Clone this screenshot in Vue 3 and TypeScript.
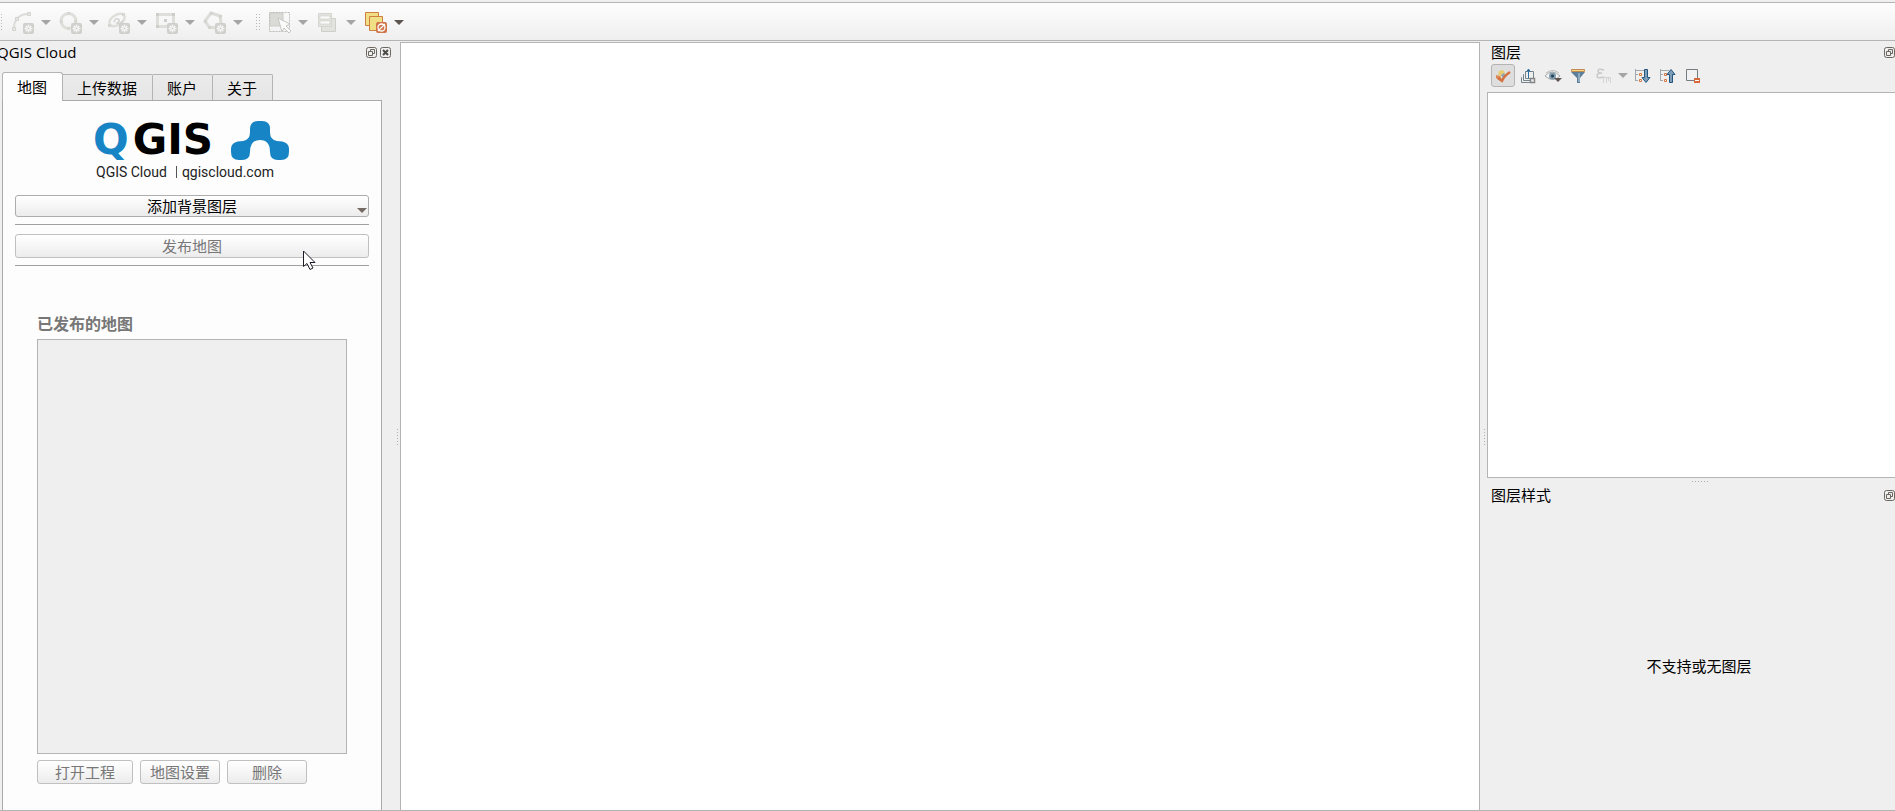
<script setup lang="ts">
import { ref } from 'vue'

const drawTools = [
  { id: 'curve', label: 'Add curve' },
  { id: 'circle', label: 'Add circle' },
  { id: 'ellipse', label: 'Add ellipse' },
  { id: 'rect', label: 'Add rectangle' },
  { id: 'polygon', label: 'Add regular polygon' },
]
const selectTools = [
  { id: 'select', label: 'Select features', enabled: false },
  { id: 'form', label: 'Select by value', enabled: false },
  { id: 'deselect', label: 'Deselect features', enabled: true },
]
const layerTools = [
  { id: 'style', label: 'Layer styling', pressed: true, enabled: true, menu: false },
  { id: 'group', label: 'Add group', pressed: false, enabled: true, menu: false },
  { id: 'eye', label: 'Map themes', pressed: false, enabled: true, menu: false },
  { id: 'filter', label: 'Filter legend', pressed: false, enabled: true, menu: false },
  { id: 'epsilon', label: 'Filter by expression', pressed: false, enabled: false, menu: true },
  { id: 'expand', label: 'Expand all', pressed: false, enabled: true, menu: false },
  { id: 'collapse', label: 'Collapse all', pressed: false, enabled: true, menu: false },
  { id: 'remove', label: 'Remove layer', pressed: false, enabled: true, menu: false },
]
const tabs = ['地图', '上传数据', '账户', '关于']
const activeTab = ref(0)
</script>

<template>
  <div class="app">
    <svg class="defs" aria-hidden="true">
      <symbol id="new-badge" viewBox="0 0 11 11">
        <rect width="11" height="11" rx="2" fill="#cfcfcc" />
        <path d="M5.5 1.5v8M1.5 5.5h8M2.7 2.7l5.6 5.6M8.3 2.7l-5.6 5.6" stroke="#f8f8f8" stroke-width="1.3" />
        <circle cx="5.5" cy="5.5" r="1" fill="#cfcfcc" />
      </symbol>
      <symbol id="tool-curve" viewBox="0 0 24 24">
        <path d="M3 17C3 9 8 3 17 3" fill="none" stroke="#dcdcda" stroke-width="2" />
        <path d="M1.500 16.500h3v3h-3zM4.500 6.500h3v3h-3zM16.500 1.500h3v3h-3z" fill="#e6e6e4" stroke="#d3d3d0" />
        <use href="#new-badge" x="12" y="12" width="11" height="11" />
      </symbol>
      <symbol id="tool-circle" viewBox="0 0 24 24">
        <circle cx="9.500" cy="10" r="7.500" fill="none" stroke="#dededb" stroke-width="3" />
        <path d="M8 1h3v3H8zM1 9h3v3H1zM15 9h3v3h-3zM8 16h3v3H8z" fill="#d6d6d3" />
        <use href="#new-badge" x="12" y="12" width="11" height="11" />
      </symbol>
      <symbol id="tool-ellipse" viewBox="0 0 24 24">
        <ellipse cx="10" cy="9" rx="8.500" ry="5" transform="rotate(-32 10 9)" fill="none" stroke="#dededb" stroke-width="2.500" />
        <path d="M7 11q1-4 4-3t-1 4q4 1 6-2" fill="none" stroke="#d3d3d0" stroke-width="1.500" />
        <path d="M1 13h3v3H1zM15 2h3v3h-3z" fill="#d6d6d3" />
        <use href="#new-badge" x="12" y="12" width="11" height="11" />
      </symbol>
      <symbol id="tool-rect" viewBox="0 0 24 24">
        <path d="M2.500 3.500h16v12h-16z" fill="none" stroke="#dededb" stroke-width="3" />
        <path d="M1 2h3v3H1zM17 2h3v3h-3zM1 14h3v3H1zM9 8h3v3H9z" fill="#cdcdca" />
        <use href="#new-badge" x="12" y="12" width="11" height="11" />
      </symbol>
      <symbol id="tool-polygon" viewBox="0 0 24 24">
        <path d="M8 2l9 3 1 7-6 5-6-1-4-6z" fill="none" stroke="#dcdcd9" stroke-width="3" />
        <path d="M7 1h3v3H7zM16 4h3v3h-3zM1 9h3v3H1zM5 15h3v3H5z" fill="#d3d3d0" />
        <use href="#new-badge" x="12" y="12" width="11" height="11" />
      </symbol>
      <symbol id="tool-select" viewBox="0 0 24 24">
        <path d="M2 2h13v13H2z" fill="#dadad7" stroke="#cecdc9" />
        <path d="M1.500 1.500h20v19h-20z" fill="none" stroke="#bdbdb9" stroke-dasharray="2 1" />
        <path d="M10 7l12 6-4 2 5 5-2 2-5-5-2 4z" fill="#fafafa" stroke="#c6c6c2" />
      </symbol>
      <symbol id="tool-form" viewBox="0 0 24 24">
        <path d="M5.500 7.500h14v13h-14z" fill="#e2e2de" stroke="#cfcfca" />
        <path d="M2.500 2.500h13v13h-13z" fill="#e2e2de" stroke="#d6d6d1" />
        <path d="M4 5h10v3H4zM4 10h10v3H4z" fill="#fbfbfb" stroke="#d3d3ce" stroke-width=".7" />
      </symbol>
      <symbol id="tool-deselect" viewBox="0 0 24 24">
        <path d="M1.500 1.500h13v13h-13z" fill="#f0df84" stroke="#cf8040" />
        <path d="M5.500 5.500h13v14h-13z" fill="#f0df84" stroke="#cf8040" />
        <rect x="12" y="11" width="11" height="11" rx="2" fill="#d07449" />
        <circle cx="17.500" cy="16.500" r="3.500" fill="none" stroke="#fff" stroke-width="1.300" />
        <path d="M14 20l7-7" stroke="#fff" stroke-width="1.300" />
      </symbol>
      <symbol id="arrow" viewBox="0 0 10 5"><path d="M0 0h10L5 5z" fill="currentColor" /></symbol>
      <symbol id="dock-float" viewBox="0 0 11 11">
        <rect x=".5" y=".5" width="10" height="10" rx="2" fill="none" stroke="#6c6660" />
        <path d="M2.500 4.500h4v4h-4zM4.500 4v-1.500h4v4H7" fill="none" stroke="#6c6660" />
      </symbol>
      <symbol id="dock-close" viewBox="0 0 11 11">
        <rect x=".5" y=".5" width="10" height="10" rx="2" fill="none" stroke="#6c6660" />
        <path d="M3 3l5 5M8 3L3 8" stroke="#4e4944" stroke-width="2" />
      </symbol>
      <symbol id="layer-style" viewBox="0 0 16 16">
        <path d="M4 3l4-1 2 3-2 4-5-2z" fill="#e8cd6e" />
        <path d="M1 7l4 1 2 3-2 2-4-3z" fill="#db8a55" />
        <path d="M6 7l3-2 2 3-3 2z" fill="#8fa3b4" />
        <path d="M3 10l4 3q2-5 8-9" fill="none" stroke="#d5703f" stroke-width="2.300" />
      </symbol>
      <symbol id="layer-group" viewBox="0 0 16 16">
        <path d="M5.500 10.500V3.500h8v7M5.500 10.500H10M4 6.500H3.500v6H10M2 9.500H1.500v5H10" fill="none" stroke="#75858b" />
        <path d="M8.500 1v9M6.500 4l2-3 2 3" fill="none" stroke="#316e9f" />
        <path d="M10.500 10.500h4v4h-4z" fill="#eee" stroke="#858585" stroke-width="1.500" />
      </symbol>
      <symbol id="layer-eye" viewBox="0 0 18 16">
        <path d="M1 8q7-8 15 0-7 7-15 0z" fill="#f7f7f7" stroke="#a3a8aa" />
        <path d="M2 5q7-5 13 0" fill="none" stroke="#b6babb" />
        <circle cx="8.500" cy="8" r="3.500" fill="#7d98aa" /><circle cx="8.500" cy="8" r="1.500" fill="#243e52" />
        <path d="M10 10h8l-4 4z" fill="#5f5550" />
      </symbol>
      <symbol id="layer-filter" viewBox="0 0 16 16">
        <path d="M1 4h14l-5 6v5H7v-5z" fill="#5b7e9b" /><path d="M8 5h2v9H8z" fill="#8fa9bc" />
        <path d="M1.500 1.500h13v2h-13z" fill="#f2d98a" stroke="#c08a50" />
      </symbol>
      <symbol id="layer-epsilon" viewBox="0 0 16 16">
        <path d="M8 2Q2 0 2 3q0 2 4 2-5 0-5 3 0 3 7 1" fill="none" stroke="#c9c9c9" stroke-width="1.500" />
        <path d="M7.500 15V9.500h7V15M10.500 10v5M12.500 10v3" fill="none" stroke="#d4d4d4" />
      </symbol>
      <symbol id="layer-tree" viewBox="0 0 16 16">
        <path d="M.5 1v12M.5 2.500H9M.5 6.500H3M.5 12.500H3" fill="none" stroke="#a2a9ac" />
        <path d="M4.500 5.500h2v2h-2zM4.500 11.500h2v2h-2z" fill="#fff" stroke="#d8743c" />
      </symbol>
      <symbol id="layer-expand" viewBox="0 0 16 16">
        <use href="#layer-tree" width="16" height="16" />
        <path d="M9.500 1.500v8H7l4 5 4-5h-2.500v-8z" fill="#7d9fba" stroke="#24557e" />
      </symbol>
      <symbol id="layer-collapse" viewBox="0 0 16 16">
        <use href="#layer-tree" width="16" height="16" />
        <path d="M9.500 14.500v-8H7l4-5 4 5h-2.500v8z" fill="#7d9fba" stroke="#24557e" />
      </symbol>
      <symbol id="layer-remove" viewBox="0 0 16 16">
        <path d="M1.500 1.500h11v11h-11z" fill="#f2f2f2" stroke="#747d80" />
        <path d="M9 10h6v5H9z" fill="#d9693b" /><path d="M10 12.500h4" stroke="#fff" />
      </symbol>
    </svg>

    <header class="toolbar">
      <i class="handle half"></i>
      <div class="tools">
        <button v-for="t in drawTools" :key="t.id" class="tool" :aria-label="t.label" disabled>
          <svg class="tool-icon"><use :href="'#tool-' + t.id" /></svg>
          <svg class="arrow"><use href="#arrow" /></svg>
        </button>
      </div>
      <i class="handle"></i>
      <div class="tools">
        <button v-for="t in selectTools" :key="t.id" class="tool" :aria-label="t.label" :disabled="!t.enabled">
          <svg class="tool-icon"><use :href="'#tool-' + t.id" /></svg>
          <svg class="arrow"><use href="#arrow" /></svg>
        </button>
      </div>
    </header>

    <div class="main">
      <aside class="dock left">
        <div class="dock-title">
          <h2 class="latin">QGIS Cloud</h2>
          <button class="dock-btn" aria-label="Float"><svg><use href="#dock-float" /></svg></button>
          <button class="dock-btn" aria-label="Close"><svg><use href="#dock-close" /></svg></button>
        </div>
        <div class="tabs" role="tablist">
          <button
            v-for="(t, i) in tabs"
            :key="t"
            class="tab"
            :class="{ active: i === activeTab }"
            role="tab"
            :aria-selected="i === activeTab"
            @click="activeTab = i"
          >{{ t }}</button>
        </div>
        <section class="page">
          <div class="logo">
            <div class="brand">
              <div class="wordmark"><span class="blue">Q</span><span>GIS</span></div>
              <svg class="mark" viewBox="0 0 58 39" aria-hidden="true">
                <path
                  d="M27 0h4q8 0 8 8v3q0 8 7 9 12 0 12 8v3q0 8-8 8h-3q-8 0-8-8 0-12-10-12t-10 12q0 8-8 8H8q-8 0-8-8v-3q0-8 12-8 7-1 7-9V8q0-8 8-8z"
                  fill="#1785c5"
                />
              </svg>
            </div>
            <div class="tagline"><span>QGIS Cloud</span><i class="bar"></i><span>qgiscloud.com</span></div>
          </div>
          <button class="btn wide">添加背景图层<svg class="menu-arrow"><use href="#arrow" /></svg></button>
          <hr />
          <div class="publish">
            <button class="btn wide tall" disabled>发布地图</button>
            <svg class="cursor" viewBox="0 0 13 20" aria-hidden="true">
              <path d="M.5 1v15.500l3.500-3 3 6 3-1.500-3-5.500h5z" fill="#fff" stroke="#1c1c28" />
            </svg>
          </div>
          <hr />
          <div class="published">
            <h3 id="published-label">已发布的地图</h3>
            <div class="list" role="listbox" aria-labelledby="published-label"></div>
            <div class="actions">
              <button class="btn tall open" disabled>打开工程</button>
              <button class="btn tall" disabled>地图设置</button>
              <button class="btn tall" disabled>删除</button>
            </div>
          </div>
        </section>
        <i class="grip"></i>
      </aside>

      <main class="canvas"></main>

      <aside class="dock right">
        <i class="grip"></i>
        <section class="layers">
          <div class="dock-title">
            <h2>图层</h2>
            <button class="dock-btn" aria-label="Float"><svg><use href="#dock-float" /></svg></button>
          </div>
          <div class="layer-tools">
            <button
              v-for="t in layerTools"
              :key="t.id"
              class="layer-tool"
              :class="{ pressed: t.pressed, menu: t.menu }"
              :aria-label="t.label"
              :disabled="!t.enabled"
            >
              <svg class="layer-icon" :class="t.id"><use :href="'#layer-' + t.id" /></svg>
              <svg v-if="t.menu" class="arrow"><use href="#arrow" /></svg>
            </button>
          </div>
          <div class="tree"></div>
        </section>
        <div class="splitter"><i class="dots"></i></div>
        <section class="styling">
          <div class="dock-title">
            <h2>图层样式</h2>
            <button class="dock-btn" aria-label="Float"><svg><use href="#dock-float" /></svg></button>
          </div>
          <p class="empty">不支持或无图层</p>
        </section>
      </aside>
    </div>
  </div>
</template>

<style>
body {
  background: #efefef;
}
</style>

<style scoped>
.app {
  box-sizing: border-box;
  height: 100vh;
  min-height: 600px;
  display: flex;
  flex-direction: column;
  overflow: hidden;
  padding-top: 2px;
  border-bottom: 1px solid #b4b4b4;
  background: #efefef;
  color: #000;
  font-family: 'Noto Sans CJK SC', sans-serif;
  font-size: 15px;
  line-height: 20px;
}
.app * {
  box-sizing: border-box;
}
.defs {
  position: absolute;
  width: 0;
  height: 0;
}
button {
  margin: 0;
  padding: 0;
  border: 0;
  background: none;
  font: inherit;
  color: inherit;
}
svg {
  display: block;
}
h2,
h3,
p {
  margin: 0;
}
.toolbar {
  flex: none;
  display: flex;
  align-items: center;
  height: 39px;
  border-top: 1px solid #b4b4b4;
  border-bottom: 1px solid #b4b4b4;
  background: linear-gradient(#fdfdfd, #efefef);
}
.tools {
  display: flex;
  padding-top: 2px;
}
.tool {
  display: flex;
  align-items: center;
  gap: 6px;
  width: 48px;
  color: #5f5550;
}
.tool:disabled,
.layer-tool:disabled {
  color: #a5a5a5;
}
.tool-icon {
  width: 24px;
  height: 24px;
}
.arrow {
  width: 10px;
  height: 5px;
}
.handle {
  width: 5px;
  height: 17px;
  margin: 0 8px 0 4px;
  background: radial-gradient(circle, #b8b8b8 1px, transparent 1px) 0 0 / 3px 3px;
}
.handle.half {
  width: 2px;
  margin: 0 9px 0 0;
}
.main {
  flex: 1;
  min-height: 0;
  display: flex;
}
.dock {
  position: relative;
  flex: none;
  display: flex;
  flex-direction: column;
}
.left {
  width: 400px;
  padding: 0 18px 0 2px;
}
.dock-title {
  flex: none;
  display: flex;
  align-items: center;
  gap: 3px;
  height: 22px;
}
.dock-title h2 {
  flex: 1;
  font-size: 15px;
  font-weight: 400;
}
.dock-title .latin {
  margin-left: -5px;
  font-family: 'Open Sans', sans-serif;
}
.left .dock-title {
  margin-right: -9px;
}
.dock-btn svg {
  width: 11px;
  height: 11px;
}
.tabs {
  position: relative;
  z-index: 1;
  flex: none;
  display: flex;
  align-items: flex-end;
  height: 29px;
  margin-top: 9px;
}
.tab {
  height: 26px;
  margin-bottom: 1px;
  padding: 0 15px 0 14px;
  border: 1px solid #b4b4b4;
  border-width: 1px 1px 0 0;
  border-radius: 0 2px 0 0;
  background: linear-gradient(#ebebeb, #e5e5e5);
}
.tab.active {
  height: 29px;
  margin-bottom: 0;
  border-left-width: 1px;
  border-radius: 3px 3px 0 0;
  background: #fdfdfd;
}
.page {
  flex: 1;
  min-height: 0;
  display: flex;
  flex-direction: column;
  margin-top: -1px;
  padding: 19px 12px 26px;
  border: 1px solid #aaa;
  border-bottom: 0;
  background: #fdfdfd;
}
.logo {
  flex: none;
  width: 194px;
  height: 75px;
  margin: 0 auto;
}
.brand {
  display: flex;
  justify-content: space-between;
  align-items: center;
  height: 40px;
}
.wordmark {
  display: flex;
  gap: 4px;
  margin-left: -2px;
  font: bold 42px/40px 'DejaVu Sans', sans-serif;
}
.blue {
  color: #1785c5;
}
.mark {
  width: 58px;
  height: 39px;
}
.tagline {
  display: flex;
  align-items: center;
  gap: 5px;
  padding-left: 1px;
  margin-top: 2px;
  font: 14px/20px Roboto, sans-serif;
  color: #222;
}
.bar {
  width: 1px;
  height: 12px;
  margin-left: 4px;
  background: #555;
}
.btn {
  position: relative;
  flex: none;
  height: 22px;
  min-width: 80px;
  border: 1px solid #adadad;
  border-radius: 3px;
  background: linear-gradient(#fff, #ececec);
}
.btn.tall {
  height: 24px;
}
.btn:disabled {
  border-color: #c0c0c0;
  color: #777;
}
.wide {
  width: 100%;
}
.menu-arrow {
  position: absolute;
  right: 1px;
  bottom: 3px;
  width: 10px;
  height: 5px;
  color: #756963;
}
hr {
  flex: none;
  width: 100%;
  height: 1px;
  margin: 7px 0 9px;
  border: 0;
  background: #a0a0a0;
}
.publish {
  position: relative;
}
.publish + hr {
  margin: 7px 0 0;
}
.cursor {
  position: absolute;
  right: 53px;
  top: 16px;
  width: 13px;
  height: 20px;
}
.published {
  flex: 1;
  min-height: 0;
  display: flex;
  flex-direction: column;
  padding: 47px 22px 0;
}
h3 {
  font-size: 16px;
  line-height: 20px;
  color: #777;
}
.list {
  flex: 1;
  margin-top: 6px;
  border: 1px solid #b4b4b4;
  background: #efefef;
}
.actions {
  display: flex;
  gap: 7px;
  margin-top: 6px;
}
.open {
  width: 96px;
}
.grip {
  position: absolute;
  right: 2px;
  top: 388px;
  width: 1px;
  height: 18px;
  background: repeating-linear-gradient(#b0b0b0 0 1px, transparent 1px 3px);
}
.right .grip {
  right: auto;
  left: 4px;
}
.canvas {
  flex: 1;
  min-width: 0;
  margin-top: 1px;
  border: 1px solid #b4b4b4;
  border-bottom: 0;
  background: #fff;
}
.right {
  width: 415px;
  padding-left: 7px;
}
.layers {
  flex: 437 1 0;
  display: flex;
  flex-direction: column;
}
.right .dock-title {
  padding-left: 4px;
}
.layer-tools {
  display: flex;
  gap: 1px;
  padding: 1px 4px 5px;
}
.layer-tool {
  display: flex;
  align-items: center;
  justify-content: center;
  width: 24px;
  height: 23px;
  border: 1px solid transparent;
  border-radius: 3px;
}
.layer-tool.menu {
  justify-content: flex-start;
  gap: 6px;
  width: 39px;
  padding-left: 4px;
}
.pressed {
  border-color: #b4b4b4;
  background: #dedede;
}
.layer-icon {
  flex: none;
  width: 16px;
  height: 16px;
}
.layer-icon.eye {
  width: 18px;
}
.tree {
  flex: 1;
  border: 1px solid #b4b4b4;
  border-right: 0;
  background: #fff;
}
.splitter {
  flex: none;
  display: flex;
  justify-content: center;
  align-items: center;
  height: 6px;
  padding-left: 18px;
}
.dots {
  width: 17px;
  height: 1px;
  background: repeating-linear-gradient(90deg, #b0b0b0 0 1px, transparent 1px 3px);
}
.styling {
  flex: 326 1 0;
  display: flex;
  flex-direction: column;
}
.empty {
  flex: 1;
  display: flex;
  align-items: center;
  justify-content: center;
  padding-left: 16px;
  padding-top: 16px;
}
</style>
